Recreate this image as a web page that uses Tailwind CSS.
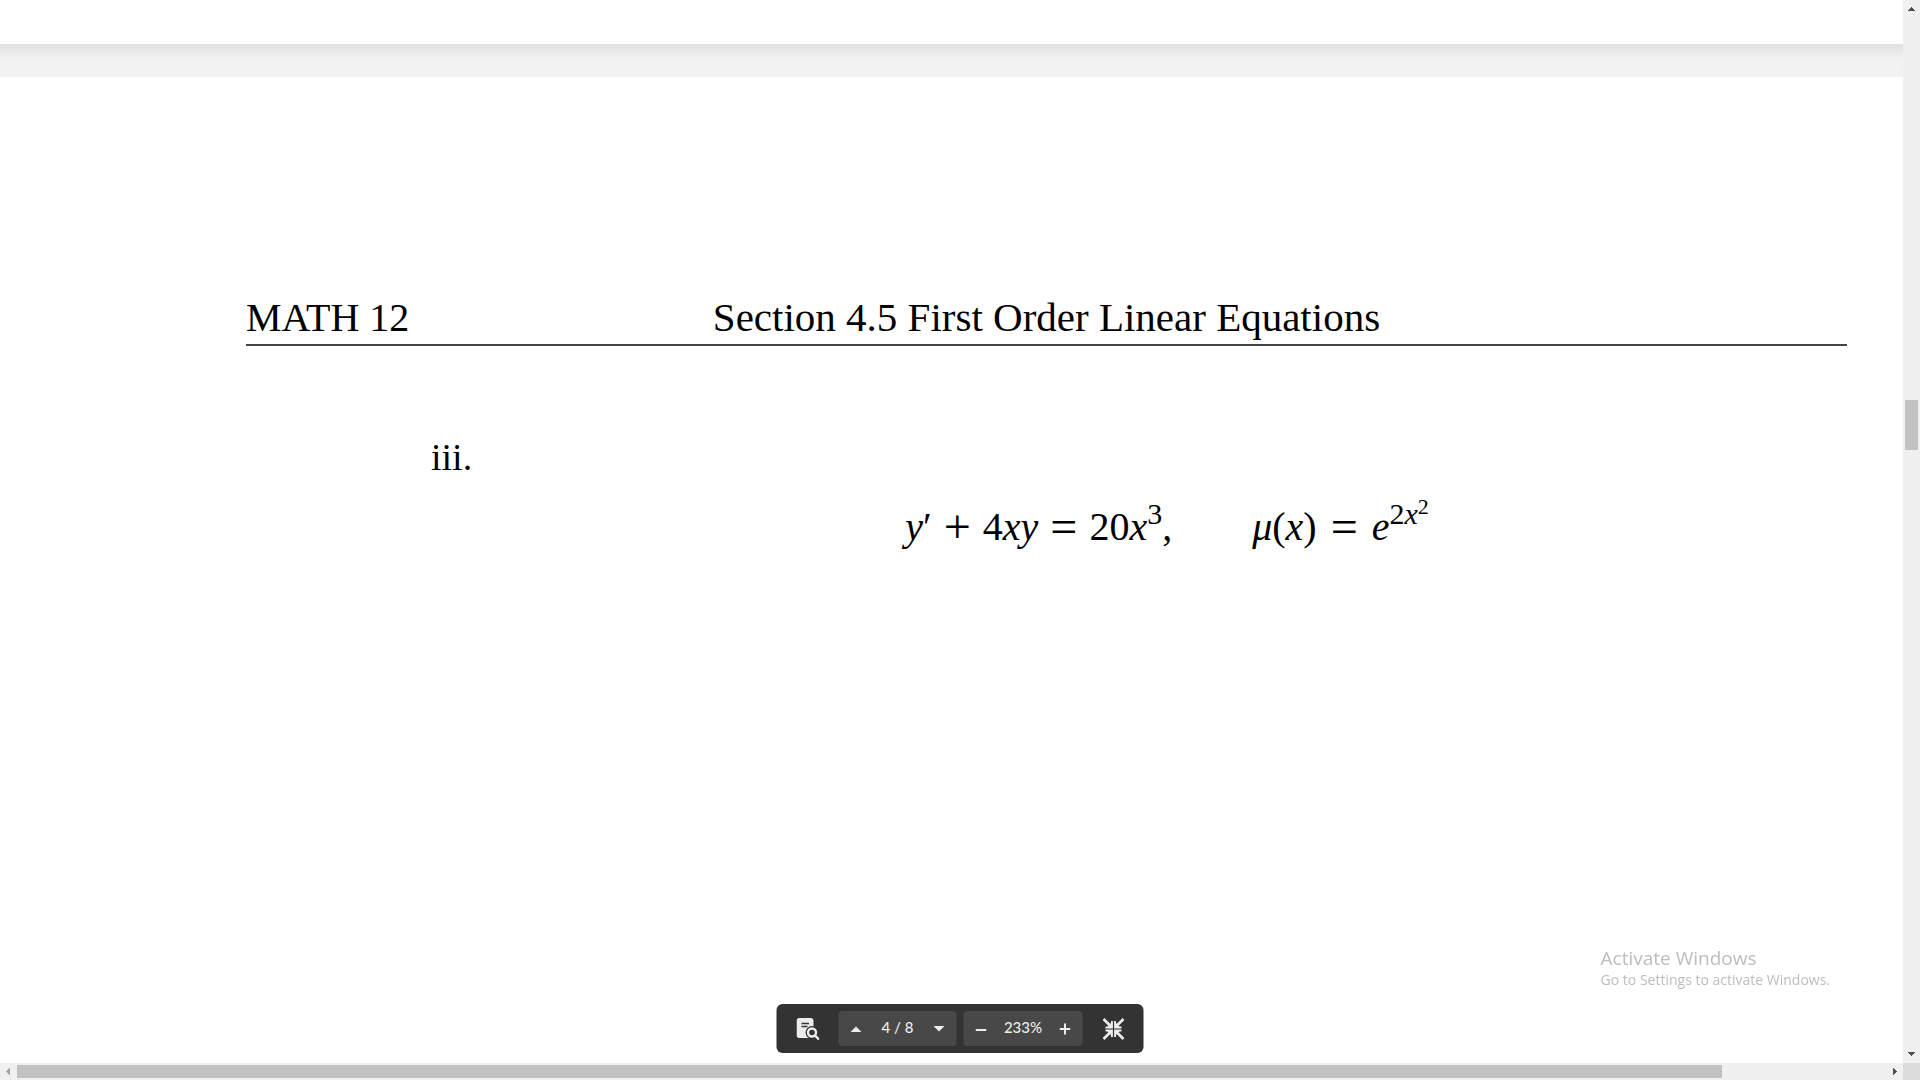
<!DOCTYPE html>
<html lang="en">
<head>
    <meta charset="UTF-8">
    <meta name="viewport" content="width=device-width, initial-scale=1.0">
    <title>Section 4.5 First Order Linear Equations</title>
    <script src="https://cdn.jsdelivr.net/npm/@tailwindcss/browser@4"></script>
</head>
<body class="h-screen overflow-hidden bg-white">

    <div class="grid h-full grid-cols-[minmax(0,1fr)_17px] grid-rows-[minmax(0,1fr)_17px]">

        <!-- Document viewer -->
        <main class="flex flex-col overflow-hidden bg-white">
            <div class="h-11 shrink-0"></div>
            <div class="h-[33px] shrink-0 bg-linear-to-b from-[#e2e2e2] via-[#f2f2f2] via-50% to-[#f3f3f3]"></div>

            <article class="grow pt-[218px] pr-14 pl-[246px] font-['Liberation_Serif',serif] text-[38px] leading-[44px] text-black">
                <header class="grid grid-cols-[1fr_auto_1fr] items-baseline border-b-2 border-[#444] pb-1 text-[40px]">
                    <p>MATH 12</p>
                    <h1 class="text-[41px]">Section 4.5 First Order Linear Equations</h1>
                </header>

                <section class="pt-[89px] pl-[185px]">
                    <p>iii.</p>
                    <div class="flex items-end justify-center gap-20 pt-[26px] pl-14 text-[40px]">
                        <p class="flex items-end gap-3">
                            <span><i>y</i>′</span>
                            <span class="text-[48px]">+</span>
                            <span>4<i>xy</i></span>
                            <span class="text-[48px]">=</span>
                            <span>20<i>x</i><sup class="relative -top-4 align-baseline text-[30px] leading-none">3</sup>,</span>
                        </p>
                        <p class="flex items-end gap-3.5">
                            <span><i>μ</i>(<i>x</i>)</span>
                            <span class="text-[48px]">=</span>
                            <span><i>e</i><sup class="relative -top-4 align-baseline text-[30px] leading-none">2<i>x</i><sup class="relative -top-2.5 align-baseline text-[22px] leading-none">2</sup></sup></span>
                        </p>
                    </div>
                </section>
            </article>
        </main>

        <!-- Vertical scrollbar -->
        <div class="flex flex-col items-center bg-[#f0f0f0] py-1.5">
            <svg class="h-2 w-[7px] shrink-0" viewBox="0 0 7 8" fill="#505050" shape-rendering="crispEdges"><path d="M3 1h1v1h1v1h1v1h1v1H0V4h1V3h1V2h1z"/></svg>
            <div class="mt-[386px] h-[50px] w-[13px] bg-[#c1c1c1]"></div>
            <svg class="mt-auto h-2 w-[7px] shrink-0" viewBox="0 0 7 8" fill="#505050" shape-rendering="crispEdges"><path d="M0 3h7v1H6v1H5v1H4v1H3V6H2V5H1V4H0z"/></svg>
        </div>

        <!-- Horizontal scrollbar -->
        <div class="flex items-center bg-[#f0f0f0] pr-[5px] pl-1">
            <svg class="h-[7px] w-[13px] shrink-0" viewBox="0 0 13 7" fill="#a3a3a3" shape-rendering="crispEdges"><path d="M2 3h1V2h1V1h1V0h1v7H5V6H4V5H3V4H2z"/></svg>
            <div class="h-[13px] w-[90%] bg-[#c1c1c1]"></div>
            <svg class="ml-auto h-[7px] w-1.5 shrink-0" viewBox="0 0 6 7" fill="#505050" shape-rendering="crispEdges"><path d="M1 0h1v1h1v1h1v1h1v1H4v1H3v1H2v1H1z"/></svg>
        </div>
        <div class="bg-[#dcdcdc]"></div>
    </div>

    <!-- Activation notice -->
    <aside class="fixed right-[90px] bottom-[90px] font-['Open_Sans',sans-serif] text-[#bdbdbd]">
        <p class="text-[19px] leading-6">Activate Windows</p>
        <p class="text-[14px] leading-5">Go to Settings to activate Windows.</p>
    </aside>

    <!-- Viewer toolbar -->
    <nav class="fixed bottom-[27px] left-1/2 flex h-[49px] -translate-x-1/2 items-center rounded-md bg-[#333] pr-[19px] pl-5 font-[Lato,sans-serif] text-[15px] font-medium text-[#ececec]" aria-label="Document toolbar">
        <button type="button" class="mr-[19px]" aria-label="Search document">
            <svg class="size-[23px]" viewBox="0 0 23 23">
                <path fill="#ececec" d="M3 1h11a3 3 0 0 1 3 3v17H3a3 3 0 0 1-3-3V4a3 3 0 0 1 3-3z"/>
                <path stroke="#333" stroke-width="1.5" d="M5 6.500h7.500M5 9.500h6"/>
                <path stroke="#333" stroke-width="6" d="m17 17 6 6"/>
                <circle cx="15.500" cy="15.500" r="6.500" fill="#333"/>
                <circle cx="15.500" cy="15.500" r="4" fill="#333" stroke="#ececec" stroke-width="2.400"/>
                <path stroke="#ececec" stroke-width="2.400" d="m18.500 18.500 4 4"/>
            </svg>
        </button>
        <div class="flex h-[35px] w-[118px] items-center justify-between rounded-sm bg-[#484848] px-3">
            <button type="button" aria-label="Previous page">
                <svg class="h-5 w-[11px]" viewBox="0 0 11 20" fill="#ececec"><path d="M0 13 5.500 7.500 11 13z"/></svg>
            </button>
            <span class="pb-0.5">4 / 8</span>
            <button type="button" aria-label="Next page">
                <svg class="h-5 w-[11px]" viewBox="0 0 11 20" fill="#ececec"><path d="M0 7h11l-5.500 5.500z"/></svg>
            </button>
        </div>
        <div class="ml-[7px] flex h-[35px] w-[119px] items-center justify-between rounded-sm bg-[#484848] px-3">
            <button type="button" aria-label="Zoom out">
                <svg class="h-5 w-[11px]" viewBox="0 0 11 20" stroke="#ececec" stroke-width="2"><path d="M0 11h11"/></svg>
            </button>
            <span class="pb-0.5">233%</span>
            <button type="button" aria-label="Zoom in">
                <svg class="h-5 w-[11px]" viewBox="0 0 11 20" stroke="#ececec" stroke-width="2"><path d="M0 10h11M5.500 4.500v11"/></svg>
            </button>
        </div>
        <button type="button" class="ml-5" aria-label="Exit full screen">
            <svg class="size-[22px]" viewBox="0 0 22 22">
                <path stroke="#ececec" stroke-width="2.600" d="m1 1 6 6M21 1l-6 6M1 21l6-6M21 21l-6-6"/>
                <path fill="#ececec" d="M10.400 3v7.400H3V8.500h2L8.500 5V3zM11.600 3v7.400H19V8.500h-2L13.500 5V3zM10.400 19v-7.400H3v1.900h2L8.500 17v2zM11.600 19v-7.400H19v1.900h-2L13.500 17v2z"/>
            </svg>
        </button>
    </nav>

</body>
</html>
